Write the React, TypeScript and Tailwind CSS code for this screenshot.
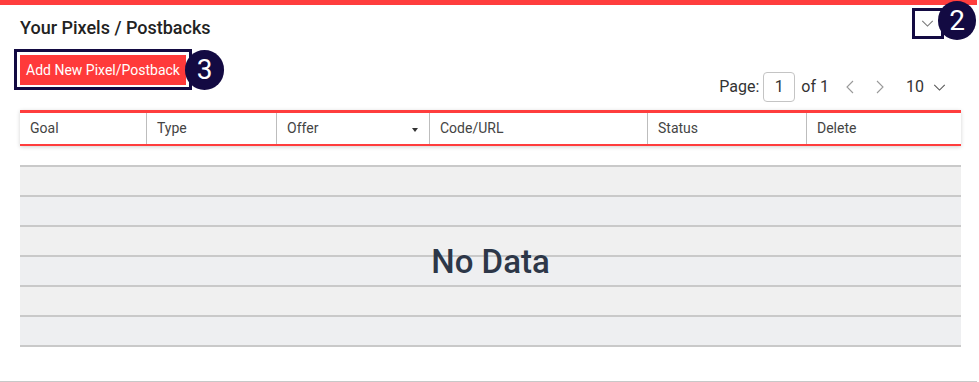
import React from "react";

const cols: { label: string; w: string; sort?: boolean }[] = [
  { label: "Goal", w: "w-[126px]" },
  { label: "Type", w: "w-[130px]" },
  { label: "Offer", w: "w-[153px]", sort: true },
  { label: "Code/URL", w: "w-[218px]" },
  { label: "Status", w: "w-[159px]" },
  { label: "Delete", w: "w-[155px]" },
];

function Badge({ n, className }: { n: string; className: string }) {
  return (
    <span
      className={
        "absolute flex items-center justify-center rounded-full bg-[#130a42] text-white text-[28px] leading-none " +
        className
      }
    >
      {n}
    </span>
  );
}

function ChevronDown({ className }: { className?: string }) {
  return (
    <svg viewBox="0 0 14 8" className={className} fill="none" stroke="currentColor" strokeWidth="1.2">
      <path d="M1 1l6 6 6-6" />
    </svg>
  );
}

export default function App() {
  const rows = [0, 1, 2, 3, 4, 5];
  return (
    <div
      className="w-[977px] h-[382px] bg-white border-t-[5px] border-t-[#ff3d3d] border-b border-b-[#c8c8c8] flex flex-col"
      style={{ fontFamily: "Roboto, 'Liberation Sans', sans-serif" }}
    >
      {/* title row */}
      <div className="h-[44px] flex items-center justify-between pl-5 relative">
        <h1 className="text-[18px] font-medium text-[#222]">Your Pixels / Postbacks</h1>
        <div className="absolute left-[912px] top-[3px] w-[32px] h-[31px] border-[3px] border-[#130a42] flex items-center justify-center text-[#777]">
          <ChevronDown className="w-[13px] h-[7px] ml-[-2px]" />
        </div>
        <Badge n="2" className="left-[938px] top-[-4px] w-[38px] h-[39px]" />
      </div>

      {/* button + pagination row */}
      <div className="h-[61px] flex justify-between pl-5 pr-[31px]">
        <div className="relative mt-[6px] self-start">
          <span className="absolute left-[-6px] top-[-6px] right-[-6px] bottom-[-5px] border-[3px] border-[#130a42]" />
          <button className="relative w-[166px] h-[30px] bg-[#ff3a3a] text-white text-[14px] flex items-center justify-center">
            Add New Pixel/Postback
          </button>
          <Badge n="3" className="left-[165px] top-[-5px] w-[39px] h-[40px]" />
        </div>
        <div className="flex items-center mt-[23px] self-start h-[30px] text-[16px] text-[#333]">
          <span>Page:</span>
          <span className="ml-[4px] w-[32px] h-[30px] border border-[#c4c4c4] rounded-[4px] flex items-center justify-center">
            1
          </span>
          <span className="ml-[6px]">of 1</span>
          <svg viewBox="0 0 8 14" className="ml-[17px] w-[8px] h-[14px] text-[#999]" fill="none" stroke="currentColor" strokeWidth="1.1">
            <path d="M7 1L1 7l6 6" />
          </svg>
          <svg viewBox="0 0 8 14" className="ml-[22px] w-[8px] h-[14px] text-[#999]" fill="none" stroke="currentColor" strokeWidth="1.1">
            <path d="M1 1l6 6-6 6" />
          </svg>
          <span className="ml-[22px]">10</span>
          <ChevronDown className="ml-[9px] w-[13px] h-[7px] text-[#555]" />
        </div>
      </div>

      {/* table header */}
      <div className="mx-5 w-[941px] h-[36px] flex border-t-[3px] border-b-2 border-[#ff3d3d] bg-white shadow-[0_1px_4px_rgba(0,0,0,0.18)]">
        {cols.map((c, i) => (
          <div
            key={c.label}
            className={
              c.w +
              " h-full flex items-center justify-between pl-[10px] pr-[11px] text-[14px] text-[#444] " +
              (i > 0 ? "border-l border-[#bdbdbd]" : "")
            }
          >
            <span>{c.label}</span>
            {c.sort && (
              <svg viewBox="0 0 6 4" className="w-[6px] h-[4px] mt-[3px] text-[#333]">
                <path d="M0 0h6L3 4z" fill="currentColor" />
              </svg>
            )}
          </div>
        ))}
      </div>

      {/* body */}
      <div className="relative mx-5 mt-[19px] w-[941px] border-b-2 border-[#c9c9c9]">
        {rows.map((r) => (
          <div
            key={r}
            className={
              "h-[30px] border-t-2 border-[#c9c9c9] " + (r % 2 === 0 ? "bg-[#f0f0f0]" : "bg-[#eeeff1]")
            }
          />
        ))}
        <div className="absolute inset-0 flex items-center justify-center pt-[13px]">
          <span className="text-[33px] font-medium text-[#2d3748]">No Data</span>
        </div>
      </div>
    </div>
  );
}
